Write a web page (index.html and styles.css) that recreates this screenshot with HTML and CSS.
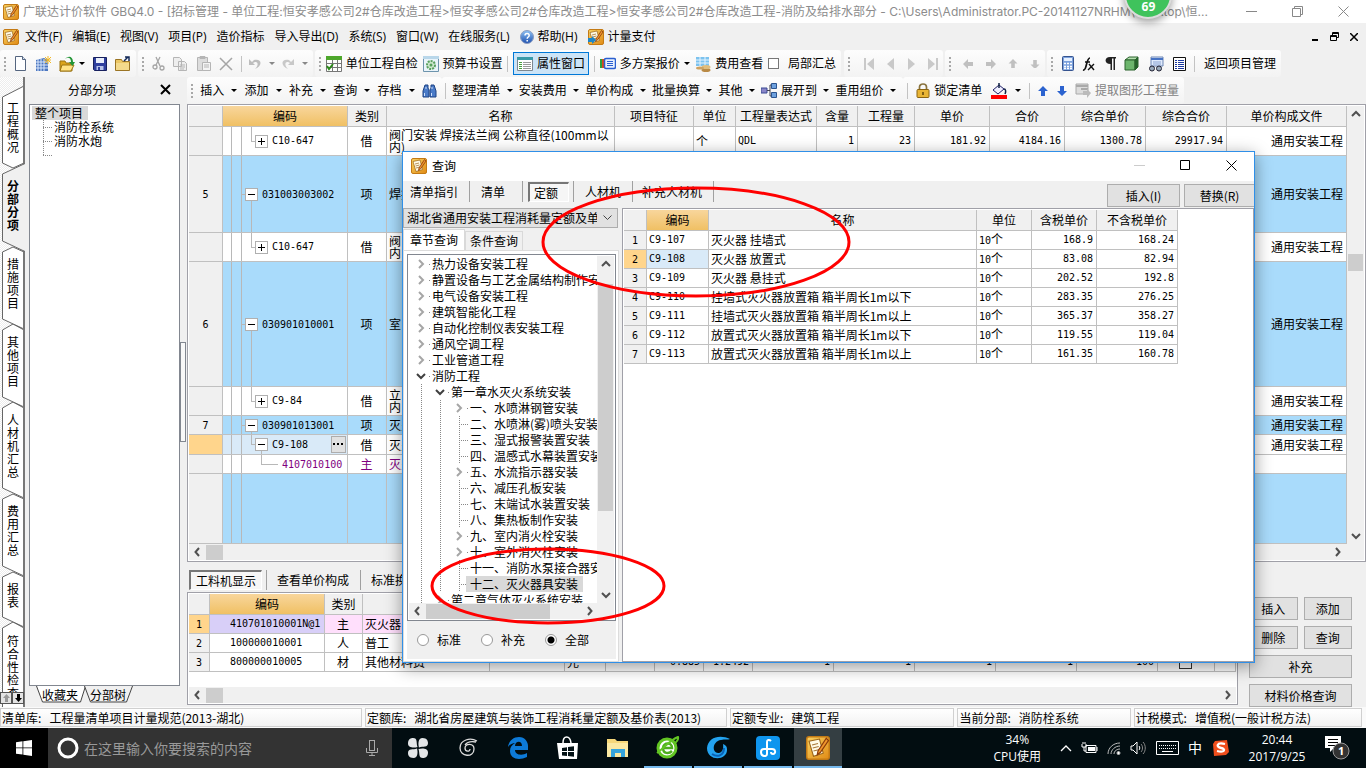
FILE: index.html
```html
<!DOCTYPE html>
<html lang="zh-CN">
<head>
<meta charset="utf-8">
<title>广联达计价软件 GBQ4.0</title>
<link rel="stylesheet" href="styles.css">
</head>
<body>
<svg class="defs" aria-hidden="true">
  <defs>
    <linearGradient id="og" x1="0" y1="0" x2="1" y2="1"><stop offset="0" stop-color="#f9d262"/><stop offset="1" stop-color="#e08a14"/></linearGradient>
    <linearGradient id="bg" x1="0" y1="0" x2="0" y2="1"><stop offset="0" stop-color="#8fc3f5"/><stop offset="1" stop-color="#1d4fae"/></linearGradient>
    <pattern id="dots" width="2" height="2" patternUnits="userSpaceOnUse"><rect width="2" height="2" fill="#fff"/><rect width="1" height="1" fill="#ededed"/><rect x="1" y="1" width="1" height="1" fill="#ededed"/></pattern>
    <symbol id="logo" viewBox="0 0 16 16"><rect x=".5" y=".5" width="15" height="15" rx="1.500" fill="url(#og)" stroke="#c47a14"/><path d="M2 3.500 9 2l2.500 9.500L5 13.500z" fill="#fffbe6" stroke="#9a6418" stroke-width=".7"/><path d="M4 6l4-1M4.500 8l4-1M5 10l4-1" stroke="#a8793a" stroke-width=".8"/><path d="M13.500 1.500 8 10l-.5 2.500L9.500 11 15 3z" fill="#f0962c" stroke="#8a3a0a" stroke-width=".8"/></symbol>
    <symbol id="left" viewBox="0 0 8 10"><path d="M6 1 2.500 5 6 9" fill="none" stroke="#505050" stroke-width="2"/></symbol>
    <symbol id="right" viewBox="0 0 8 10"><path d="M2 1 5.500 5 2 9" fill="none" stroke="#505050" stroke-width="2"/></symbol>
    <symbol id="up" viewBox="0 0 10 8"><path d="M1 6 5 2l4 4" fill="none" stroke="#505050" stroke-width="2"/></symbol>
    <symbol id="down" viewBox="0 0 10 8"><path d="M1 2l4 4 4-4" fill="none" stroke="#505050" stroke-width="2"/></symbol>
    <symbol id="arr" viewBox="0 0 10 10"><path d="M5 0 10 5H7v5H3V5H0z"/></symbol>
  </defs>
</svg>
<div class="app">
  <header class="titlebar">
    <svg class="i16"><use href="#logo"/></svg>
    <h1>广联达计价软件 GBQ4.0 - [招标管理 - 单位工程:恒安孝感公司2#仓库改造工程&gt;恒安孝感公司2#仓库改造工程&gt;恒安孝感公司2#仓库改造工程-消防及给排水部分 - C:\Users\Administrator.PC-20141127NRHM\Desktop\恒...</h1>
    <div class="winbtns">
      <button aria-label="最小化"><svg width="11" height="11"><path d="M0 5.500h11" stroke="#888"/></svg></button>
      <button aria-label="还原"><svg width="11" height="11"><path d="M.5 2.500h8v8h-8zM2.500 2.500v-2h8v8h-2" fill="none" stroke="#888"/></svg></button>
      <button aria-label="关闭"><svg width="11" height="11"><path d="M.5.5l10 10M10.500.5l-10 10" stroke="#888"/></svg></button>
    </div>
  </header>
  <div class="ball">69</div>

  <nav class="menubar">
    <svg class="i16"><use href="#logo"/></svg>
    <button>文件(F)</button><button>编辑(E)</button><button>视图(V)</button><button>项目(P)</button><button>造价指标</button><button>导入导出(D)</button><button>系统(S)</button><button>窗口(W)</button><button>在线服务(L)</button>
    <button><svg width="14" height="14"><circle cx="7" cy="7" r="6.500" fill="url(#bg)" stroke="#8a9cc0"/><path d="M5 5.500c0-3 4.200-2.500 4.200 0C9.200 7 7.200 7 7.200 8.700M7.200 10v1.500" fill="none" stroke="#fff" stroke-width="1.500"/></svg>帮助(H)</button>
    <button><svg class="i16"><use href="#logo"/><path d="M0 9h4V7l4 4-4 4v-2H0z" fill="#1d86c8"/></svg>计量支付</button>
    <div class="mdi">
      <button aria-label="最小化文档"><svg width="8" height="9"><path d="M1 8h6" stroke="#000" stroke-width="2"/></svg></button>
      <button aria-label="还原文档"><svg width="9" height="9"><path d="M.5 3.500h6v5h-6zM2.500 3V.5h6v5H7M.5 4.500h6M2.500 1.500h6" fill="none" stroke="#000"/></svg></button>
      <button aria-label="关闭文档"><svg width="8" height="8"><path d="M0 0l8 8M8 0 0 8" stroke="#000" stroke-width="1.500"/></svg></button>
    </div>
  </nav>

  <div class="toolbar">
    <div class="group g1"><i class="grip"></i>
      <button aria-label="新建"><svg width="13" height="15"><path d="M1.500.5h7l3 3v11h-10z" fill="#fdfeff" stroke="#54657f"/><path d="M8.500.5v3h3" fill="#d7e3f3" stroke="#54657f"/></svg></button>
      <button aria-label="新建向导"><svg class="i16"><path d="M1 4l8-2 4 2v11H1z" fill="#4c77c0"/><path d="M3 3v12M6 3v12M9 3v12M1 6h12M1 9h12M1 12h12" stroke="#dbe8fb"/><path d="M13 0v8M9 4h7M10 1l6 6M16 1l-6 6" stroke="#f2b825"/></svg></button>
      <button aria-label="打开"><svg class="i16"><path d="M1 5h5l1 2h6v8H1z" fill="#dba51c" stroke="#9c7412"/><path d="M3 9h12l-3 6H1z" fill="#ffe385" stroke="#9c7412"/><path d="M6 3c4-3 6 0 6 3h-2l3.500 4L16 6h-2c0-5-4-7-8-3z" fill="#239536"/></svg><i class="dd"></i></button>
      <button aria-label="保存"><svg width="14" height="14"><path d="M.5.5h13v13H1.500l-1-1z" fill="#2f3f9e" stroke="#17205e"/><path d="M3 1h8v5H3z" fill="#e9eefb"/><path d="M3.500 9h7v4h-7z" fill="#b9c4ea"/><path d="M5 10h2v3H5z" fill="#2f3f9e"/></svg></button>
      <button aria-label="关闭项目"><svg class="i16"><path d="M.5 3.500h6l1 2h7v9H.5z" fill="#ecc764" stroke="#9a7424"/><path d="M1 7h13v7H1z" fill="#f4da8b"/><path d="M9 5l4-4M10 1h4v4" fill="none" stroke="#142a58" stroke-width="1.500"/></svg></button>
    </div>
    <div class="group g2"><i class="grip"></i>
      <button aria-label="剪切"><svg width="13" height="15" fill="none" stroke="#a5a5a5" stroke-width="1.300"><path d="M4 1l4 9M8 1 4 9"/><circle cx="3" cy="11" r="2"/><circle cx="10" cy="12" r="2"/></svg></button>
      <button aria-label="复制"><svg class="i16" fill="#eee" stroke="#b5b5b5"><path d="M1.500 1.500h6l2 2v7h-8zM6.500 5.500h6l2 2v7h-8zM8 9h5M8 11h5M8 13h4"/></svg></button>
      <button aria-label="粘贴"><svg class="i16" fill="#ddd" stroke="#b5b5b5"><path d="M1.500 1.500h10v13h-10zM4 .5h5v2H4z"/><path d="M6.500 6.500h8v8h-8zM8 9h5M8 11h5" fill="#f4f4f4"/></svg></button>
      <button aria-label="删除"><svg width="14" height="14"><path d="M1 1l12 12M13 1 1 13" stroke="#a5a5a5" stroke-width="1.500"/></svg></button>
      <i class="sep"></i>
      <button aria-label="撤销"><svg width="12" height="12"><path d="M0 1v6h6L4 5c4-3 7 1 2 6 8-3 7-11-1-9L3 4z" fill="#bdbdbd"/></svg></button><i class="dd gray"></i>
      <button aria-label="重做"><svg width="12" height="12"><path d="M12 1v6H6l2-2C4 2 1 6 6 11-2 8-1 0 7 2l2 2z" fill="#c8c8c8"/></svg></button><i class="dd gray"></i>
    </div>
    <div class="group g3"><i class="grip"></i>
      <button><svg class="i16"><path d="M.5 3.500h15v12H.5zM0 7.500h16M0 11.500h16M6.500 3v13M11.500 3v13" fill="#fff" stroke="#777"/><path d="M0 0h16v4H0z" fill="#4ea72c"/><path d="M1 10l2 3 4-5" fill="none" stroke="#2d8b1b" stroke-width="2"/></svg>单位工程自检</button>
      <button><svg class="i16"><path d="M.5.5h15v15H.5z" fill="#eaf4fa" stroke="#6d94ad"/><path d="M0 0h16v3H0z" fill="#b9d7ea"/><circle cx="8" cy="9" r="4" fill="#cfe8cf" stroke="#58a05d" stroke-width="2" stroke-dasharray="2 1"/><circle cx="8" cy="9" r="1.500" fill="#58a05d"/></svg>预算书设置</button>
      <i class="sep"></i>
      <button class="on"><svg class="i16"><path d="M.5 1.500h15v13H.5z" fill="#fff" stroke="#7d8790"/><path d="M0 1h16v3H0z" fill="#3a9aa9"/><path d="M2 6.500h3M2 8.500h3M2 10.500h3M2 12.500h3" stroke="#47a03b"/><path d="M6 6.500h8M6 8.500h8M6 10.500h8M6 12.500h8" stroke="#999"/></svg>属性窗口</button>
      <i class="sep"></i>
      <button><svg class="i16"><path d="M1 3v9" stroke="#2b9f3c" stroke-width="2"/><path d="M3 3v9" stroke="#d84a21" stroke-width="2"/><rect x="4.500" y="2.500" width="11" height="10" rx="1.500" fill="#e9f1fe" stroke="#2b5fd0" stroke-width="1.500"/><path d="M7 5.500h6M7 7.500h6M7 9.500h6" stroke="#2b5fd0"/></svg>多方案报价</button><i class="dd"></i>
      <button><svg class="i16"><path d="M1 1h13v9H1z" fill="#7cc2ee"/><path d="M1 4h13M1 7h13M5 1v9M10 1v9" stroke="#e4f4ff"/><ellipse cx="11" cy="14" rx="4.500" ry="2" fill="#b98a45"/><ellipse cx="11" cy="11" rx="4.500" ry="2" fill="#e0bd7c"/><ellipse cx="5" cy="12" rx="4" ry="1.600" fill="#cda262"/></svg>费用查看</button>
      <label class="ck"><input type="checkbox">局部汇总</label>
    </div>
    <div class="group g4"><i class="grip"></i>
      <button aria-label="首条"><svg width="10" height="12" fill="#c9c9c9"><path d="M0 0h2v12H0zM10 0v12L3 6z"/></svg></button>
      <button aria-label="上一条"><svg width="7" height="12" fill="#c9c9c9"><path d="M7 0v12L0 6z"/></svg></button>
      <button aria-label="下一条"><svg width="7" height="12" fill="#c9c9c9"><path d="M0 0v12l7-6z"/></svg></button>
      <button aria-label="末条"><svg width="10" height="12" fill="#c9c9c9"><path d="M8 0h2v12H8zM0 0v12l7-6z"/></svg></button>
    </div>
    <div class="group g5"><i class="grip"></i>
      <button aria-label="左移"><svg width="10" height="10" fill="#c0c0c0"><use href="#arr" transform="rotate(-90 5 5)"/></svg></button>
      <button aria-label="右移"><svg width="10" height="10" fill="#c0c0c0"><use href="#arr" transform="rotate(90 5 5)"/></svg></button>
      <button aria-label="上移"><svg width="10" height="9" fill="#c0c0c0"><use href="#arr"/></svg></button>
      <button aria-label="下移"><svg width="10" height="9" fill="#c0c0c0"><use href="#arr" transform="rotate(180 5 5)"/></svg></button>
    </div>
    <div class="group g6"><i class="grip"></i>
      <button aria-label="计算器"><svg width="12" height="15"><rect x=".5" y=".5" width="11" height="14" rx="1" fill="#7ba1dc" stroke="#35538f"/><path d="M2 2h8v3H2z" fill="#e6f0ff"/><path d="M2 7.500h8M2 10.500h8M2 12.500h8" stroke="#fff" stroke-width="1.500" stroke-dasharray="2 1"/></svg></button>
      <button aria-label="函数"><svg width="14" height="14" fill="none" stroke="#111"><path d="M1 13c4 1 3-12 7-12M3 5h5" stroke-width="1.700"/><path d="M7 7l5 6M12 7l-6 6" stroke-width="1.400"/></svg></button>
      <button aria-label="段落"><svg width="11" height="13"><path d="M5 0h6v1.500H10V13H8.500V1.500H7V13H5.500V7C-1 7-1 0 5 0z" fill="#222"/></svg></button>
      <button aria-label="图形"><svg width="15" height="15" stroke="#2a632c"><path d="M1 4 5 1h9l-3 3z" fill="#b5dfb0"/><path d="M1 4h10v10H1z" fill="#6cb56c"/><path d="M11 4l3-3v10l-3 3z" fill="#24642a"/></svg></button>
      <button aria-label="查找表"><svg class="i16"><path d="M3 1h12v9H3z" fill="#dfeafc" stroke="#6d86b4"/><path d="M3 3h12" stroke="#4773c4" stroke-width="2"/><path d="M5 6h8M5 8h8" stroke="#8aa3d1"/><circle cx="4" cy="12.500" r="2.500" fill="#9ab" stroke="#223"/><circle cx="11" cy="12.500" r="2.500" fill="#9ab" stroke="#223"/></svg></button>
      <button aria-label="列表"><svg width="13" height="14"><path d="M.5.5h12v13H.5z" fill="#fff" stroke="#111"/><path d="M2 3.500h9M2 5.500h9M2 7.500h9M2 9.500h9M2 11.500h9" stroke="#1d3aa0" stroke-dasharray="2 1 6 1"/></svg></button>
      <i class="sep"></i>
      <button>返回项目管理</button>
    </div>
  </div>

  <div class="work">
    <nav class="rail">
      <svg class="railbg" width="25" height="630" fill="#fff" stroke="#666">
        <rect width="25" height="630" fill="url(#dots)" stroke="none"/>
        <path d="M24 551 13 545 2.500 551V640H24z"/>
        <path d="M24 500 13 495 2.500 500v40L24 550z"/>
        <path d="M24 422 13 417 2.500 422v67L24 499z"/>
        <path d="M24 331 13 325 2.500 331v80L24 421z"/>
        <path d="M24 253 13 247 2.500 253v67L24 330z"/>
        <path d="M24 175 13 170 2.500 175v67L24 252z"/>
        <path d="M24 9 2.500 20V86L13 91l11-5z"/>
        <path d="M24 0V630" stroke="#777" stroke-width="2"/>
        <path d="M26 86 2.500 97v67L26 175z" fill="#f0f0f0" stroke="none"/>
        <path d="M25 86.500 2.500 97v67L25 174.500" fill="none"/>
      </svg>
      <button>工程概况</button><button class="cur">分部分项</button><button>措施项目</button><button>其他项目</button><button>人材机汇总</button><button>费用汇总</button><button>报表</button><button>符合性检查</button>
      <div class="spin"><button aria-label="向上" disabled><svg width="7" height="8" fill="#999"><path d="M3.500 0 7 4H5v4H2V4H0z"/></svg></button><button aria-label="向下"><svg width="7" height="8"><path d="M3.500 8 7 4H5V0H2v4H0z"/></svg></button></div>
    </nav>

    <aside class="panel">
      <div class="phead"><span>分部分项</span><button aria-label="关闭面板"><svg width="11" height="11"><path d="M1 1l9 9M10 1l-9 9" stroke="#000" stroke-width="2"/></svg></button></div>
      <div class="ptree">
        <div class="root">整个项目</div>
        <ul><li>消防栓系统</li><li>消防水炮</li><li></li></ul>
      </div>
      <div class="ptabs"><button><svg width="50" height="17"><path d="M.5 0l6 16h38l5-16" fill="#fff" stroke="#444"/></svg><span>收藏夹</span></button><button><svg width="50" height="17"><path d="M.5 0l6 16h36l6-16" fill="#f0f0f0" stroke="#444"/></svg><span>分部树</span></button></div>
    </aside>
    <div class="split"><i></i></div>

    <main class="main">
      <div class="toolbar t2">
        <div class="group h1"><i class="grip"></i><button>插入</button><i class="dd"></i><button>添加</button><i class="dd"></i><button>补充</button><i class="dd"></i><button>查询</button><i class="dd"></i><button>存档</button><i class="dd"></i>
          <button aria-label="查找"><svg width="15" height="14"><path d="M3 1h3v3l1 2v7H1V7zM9 1h3l2 6v6H8V6l1-2z" fill="#4a7bc8" stroke="#1d4384"/><path d="M2.500 9v3M9.500 9v3M4 3v2M10 3v2" stroke="#cfe0fa"/></svg></button></div>
        <div class="group h2"><i class="sep"></i><button>整理清单</button><i class="dd"></i><button>安装费用</button><i class="dd"></i><button>单价构成</button><i class="dd"></i><button>批量换算</button><i class="dd"></i><button>其他</button><i class="dd"></i>
          <button><svg class="i16"><path d="M0 5h6v5H0z" fill="#8a86c9" stroke="#3b4a93"/><path d="M6 7.500h3M9 2v11M9 2h2M9 13h2" stroke="#445"/><path d="M10.500.5h5v5h-5zM10.500 9.500h5v5h-5z" fill="#6ea1de" stroke="#2c548f"/></svg>展开到</button><i class="dd"></i><button>重用组价</button><i class="dd"></i></div>
        <div class="group h3"><i class="sep"></i><button><svg width="14" height="15"><path d="M3.500 7V4c0-4 7-4 7 0v3" fill="none" stroke="#8a7440" stroke-width="1.700"/><rect x="1" y="6.500" width="12" height="8" rx="1" fill="#e9b535" stroke="#8a6412"/><path d="M7 9v3" stroke="#5b430b" stroke-width="1.500"/></svg>锁定清单</button>
          <button aria-label="填充颜色"><svg class="i16"><path d="M2 7l6-5 5 4-6 5z" fill="#eef" stroke="#226"/><path d="M8 5V0M13 6c2 0 2 3 1 5" fill="none" stroke="#124" stroke-width="1.500"/><path d="M0 12h16v4H0z" fill="red"/></svg></button><i class="dd"></i><i class="sep"></i>
          <button aria-label="上移行"><svg width="10" height="10" fill="#2c63cf"><use href="#arr"/></svg></button><button aria-label="下移行"><svg width="10" height="10" fill="#2c63cf"><use href="#arr" transform="rotate(180 5 5)"/></svg></button>
          <button disabled><svg class="i16"><path d="M1 1h12v10H1z" fill="#ddd" stroke="#aaa"/><path d="M1 3h12M6 6h7" stroke="#aaa" stroke-width="2"/><path d="M8 8h4V6l4 4-4 5v-3H8z" fill="#bbb"/></svg>提取图形工程量</button></div>
      </div>

      <section class="box upper">
        <div class="gridrow">
          <div class="scrollarea">
          <table class="grid">
            <colgroup><col class="c34"><col class="c125"><col class="c39"><col><col class="c79"><col class="c42"><col class="c81"><col class="c41"><col class="c57"><col class="c75"><col class="c75"><col class="c81"><col class="c81"><col class="c120"></colgroup>
            <thead><tr><th></th><th class="or">编码</th><th>类别</th><th>名称</th><th>项目特征</th><th>单位</th><th>工程量表达式</th><th>含量</th><th>工程量</th><th>单价</th><th>合价</th><th>综合单价</th><th>综合合价</th><th>单价构成文件</th></tr></thead>
            <tbody>
              <tr class="r29"><th></th><td class="code l2"><b class="pm plus"></b><span class="n">C10-647</span></td><td class="c">借</td><td>阀门安装 焊接法兰阀 公称直径(100mm以<br>内)</td><td></td><td>个</td><td class="n">QDL</td><td class="r n">1</td><td class="r n">23</td><td class="r n">181.92</td><td class="r n">4184.16</td><td class="r n">1300.78</td><td class="r n">29917.94</td><td class="r">通用安装工程</td></tr>
              <tr class="r77 blue"><th class="n">5</th><td class="code l1"><b class="pm"></b><span class="n">031003003002</span></td><td class="c">项</td><td>焊接</td><td></td><td></td><td></td><td></td><td></td><td></td><td></td><td></td><td></td><td class="r">通用安装工程</td></tr>
              <tr class="r29"><th></th><td class="code l2"><b class="pm plus"></b><span class="n">C10-647</span></td><td class="c">借</td><td>阀<br>内</td><td></td><td></td><td></td><td></td><td></td><td></td><td></td><td></td><td></td><td class="r">通用安装工程</td></tr>
              <tr class="r125 blue"><th class="n">6</th><td class="code l1"><b class="pm"></b><span class="n">030901010001</span></td><td class="c">项</td><td>室</td><td></td><td></td><td></td><td></td><td></td><td></td><td></td><td></td><td></td><td class="r">通用安装工程</td></tr>
              <tr class="r29"><th></th><td class="code l2"><b class="pm plus"></b><span class="n">C9-84</span></td><td class="c">借</td><td>立<br>内</td><td></td><td></td><td></td><td></td><td></td><td></td><td></td><td></td><td></td><td class="r">通用安装工程</td></tr>
              <tr class="r19 blue"><th class="n">7</th><td class="code l1"><b class="pm"></b><span class="n">030901013001</span></td><td class="c">项</td><td>灭火</td><td></td><td></td><td></td><td></td><td></td><td></td><td></td><td></td><td></td><td class="r">通用安装工程</td></tr>
              <tr class="r20"><th class="sel"></th><td class="code l2 has act"><b class="pm"></b><span class="n">C9-108</span><button class="more" aria-label="更多"><svg width="11" height="2"><path d="M0 0h2v2H0zM4 0h2v2H4zM8 0h2v2H8z"/></svg></button></td><td class="c">借</td><td>灭火</td><td></td><td></td><td></td><td></td><td></td><td></td><td></td><td></td><td></td><td class="r">通用安装工程</td></tr>
              <tr class="r19 purple"><th></th><td class="code l3"><span class="n">4107010100</span></td><td class="c">主</td><td>灭火</td><td></td><td></td><td></td><td></td><td></td><td></td><td></td><td></td><td></td><td></td></tr>
              <tr class="blue"><th></th><td class="code"></td><td></td><td></td><td></td><td></td><td></td><td></td><td></td><td></td><td></td><td></td><td></td><td></td></tr>
            </tbody>
          </table>
          </div>
          <div class="vs v1"><svg width="10" height="8"><use href="#up"/></svg><i></i><svg width="10" height="8"><use href="#down"/></svg></div>
        </div>
        <div class="hs"><svg width="8" height="10"><use href="#left"/></svg><i></i><svg width="8" height="10"><use href="#right"/></svg></div>
      </section>

      <div class="subtabs"><button class="press">工料机显示</button><button>查看单价构成</button><button>标准换</button></div>

      <div class="lower">
        <section class="box">
          <table class="grid g19">
            <colgroup><col class="c21"><col class="c115"><col class="c38"><col><col class="c75"><col class="c41"><col class="c49"><col class="c49"><col class="c49"><col class="c81"><col class="c81"><col class="c81"><col class="c81"><col class="c81"><col class="c57"><col class="c21"></colgroup>
            <thead><tr><th></th><th class="or">编码</th><th>类别</th><th></th><th></th><th></th><th></th><th></th><th></th><th></th><th></th><th></th><th></th><th></th><th></th><th></th></tr></thead>
            <tbody>
              <tr class="pink"><th class="sel n">1</th><td class="lil in n">410701010001N@1</td><td class="c">主</td><td>灭火器</td><td></td><td></td><td></td><td></td><td></td><td></td><td></td><td></td><td></td><td></td><td></td><td></td></tr>
              <tr><th class="n">2</th><td class="in n">100000010001</td><td class="c">人</td><td>普工</td><td></td><td></td><td></td><td></td><td></td><td></td><td></td><td></td><td></td><td></td><td></td><td></td></tr>
              <tr><th class="n">3</th><td class="in n">800000010005</td><td class="c">材</td><td>其他材料费</td><td></td><td>元</td><td></td><td class="r n">0.885</td><td class="r n">1.2492</td><td class="r n">1</td><td class="r n">1</td><td class="r n">1</td><td class="r n">1</td><td class="r n">100</td><td class="c"><input type="checkbox" aria-label="暂估"></td><td></td></tr>
            </tbody>
          </table>
          <div class="hs"><svg width="8" height="10"><use href="#left"/></svg><i></i><svg width="8" height="10"><use href="#right"/></svg></div>
        </section>
        <div class="btns"><button>插入</button><button>添加</button><button>删除</button><button>查询</button><button class="wide">补充</button><button class="wide">材料价格查询</button></div>
      </div>
    </main>
  </div>

  <footer class="status"><span class="s1">清单库: &nbsp;&nbsp;工程量清单项目计量规范(2013-湖北)</span><span class="s1">定额库: &nbsp;&nbsp;湖北省房屋建筑与装饰工程消耗量定额及基价表(2013)</span><span class="s2">定额专业: &nbsp;&nbsp;建筑工程</span><span class="s3">当前分部: &nbsp;&nbsp;消防栓系统</span><span class="s4">计税模式: &nbsp;&nbsp;增值税(一般计税方法)</span></footer>

  <footer class="taskbar">
    <button class="start" aria-label="开始"><svg width="16" height="16" fill="#fff"><path d="M0 2.200l6.500-.9v6.200H0zM7.300 1.200 16 0v7.500H7.300zM0 8.300h6.500v6.300L0 13.700zM7.300 8.300H16V16l-8.700-1.200z"/></svg></button>
    <label class="search"><svg width="22" height="22"><circle cx="11" cy="11" r="9" fill="none" stroke="#fff" stroke-width="3"/></svg><input type="text" placeholder="在这里输入你要搜索的内容" aria-label="搜索"><svg width="12" height="16" fill="none" stroke="#aaa"><rect x="3.500" y=".5" width="5" height="10"/><path d="M.5 8v4.500h11V8M6 13v3M3 15.500h6"/></svg></label>
    <div class="apps">
      <button aria-label="应用"><svg width="22" height="22" fill="#e4e6e8"><path d="M10.500 10C7 11 1 11 1 6.500 1 2 4 1 6 1c5 0 3 5 4.500 9z"/><path d="M12 10.500C11 7 11 1 15.500 1 20 1 21 4 21 6c0 5-5 3-9 4.500z"/><path d="M11.500 12c3.500-1 9.500-1 9.500 3.500 0 4.500-3 5.500-5 5.500-5 0-3-5-4.500-9z"/><path d="M10 11.500c1 3.500 1 9.500-3.500 9.500C2 21 1 18 1 16c0-5 5-3 9-4.500z"/></svg></button>
      <button aria-label="浏览器助手"><svg width="20" height="20" fill="none" stroke="#ddd" stroke-width="1.300"><path d="M19 3C12-1 2 2 2 10c0 9 14 10 14 1 0-6-9-6-9-1 0 4 5 4 5 1M18 4c-5-1-9 0-11 3"/></svg></button>
      <button aria-label="Edge"><svg width="22" height="22"><path d="M1 10C2 3 7 0 12 0c6 0 9 5 9 9v4H8c0 5 7 6 12 3v4C12 24 3 22 3 14c0-4 2-6 5-8-2 0-5 1-7 4zm7-1h7c0-6-7-5-7 0z" fill="#0d7ad8"/></svg></button>
      <button aria-label="应用商店"><svg width="22" height="24"><path d="M0 7h21l-1 16H2z" fill="#fff"/><path d="M6 7c0-8 7-8 8 0" fill="none" stroke="#fff" stroke-width="1.500"/><path d="M5 12l5-.7V15H5zM11 11l6-.8V15h-6zM5 16h5v4l-5-.6zM11 16h6v4.800L11 20z" fill="#021014"/></svg></button>
      <button aria-label="资源管理器"><svg width="22" height="20"><path d="M0 1h8l2 2h11v16H0z" fill="#f6d77a"/><path d="M0 5h21v14H0z" fill="#fbe8a2"/><path d="M4 11h14v8h-4v-4H8v4H4z" fill="#35a3dc"/></svg></button>
      <button class="run" aria-label="360浏览器"><svg width="24" height="24"><circle cx="11" cy="12" r="9" fill="#fff" stroke="#62c523" stroke-width="3"/><path d="M7 12h9c0-6-8-6-9 0 0 6 6 6 9 3" fill="none" stroke="#4dae1d" stroke-width="2.500"/><path d="M1 17C8 12 14 4 22 1c1 3-3 6-4 7" fill="none" stroke="#62c523" stroke-width="2"/></svg></button>
      <button class="run" aria-label="广联达"><svg width="24" height="24"><path d="M24 3C14-2 2 1 1 12c0 14 21 13 20 1 0-3-2-4-4-5 1 7-2 9-5 9C5 16 7 5 15 4c4-1 7 0 9-1z" fill="#23a3f0"/><path d="M6 18c6 4 12 1 12-6" fill="none" stroke="#0b62b5" stroke-width="2"/></svg></button>
      <button class="run" aria-label="云服务"><svg width="24" height="24"><rect width="24" height="24" rx="4" fill="#0f95ee"/><path d="M15 5c-2-2-4-1-4 1v12c0 3-6 3-6-2 0-2 1-3 3-3h8c4 0 4 5 1 5-2 0-2-2-2-2" fill="none" stroke="#fff" stroke-width="2"/></svg></button>
      <button class="run cur" aria-label="计价软件"><svg width="24" height="24" viewBox="0 0 16 16"><use href="#logo"/></svg></button>
    </div>
    <div class="tray">
      <div class="two cpu">34%<br>CPU使用</div>
      <svg width="12" height="7"><path d="M1 6l5-5 5 5" fill="none" stroke="#fff" stroke-width="1.300"/></svg>
      <svg width="17" height="12" fill="none" stroke="#fff"><path d="M5 3.500h10v7H5zM16 5v4M1 2v3h4V2M2 0v2M4 0v2M3 5v4h2"/><path d="M7 5h7v4H7z" fill="#fff" stroke="none"/></svg>
      <svg width="14" height="13" fill="none" stroke="#bbb"><path d="M1 12C1 6 6 1 13 1M4 12c0-4 4-8 9-8M7 12c0-3 3-5 6-5"/><circle cx="11.500" cy="11" r="1.500" fill="#fff"/></svg>
      <svg width="17" height="14" fill="none" stroke="#fff"><path d="M1 5h2l4-4v12L3 9H1zM9 5c1 1 1 3 0 4"/><path d="M11 3c2 2 2 6 0 8M13 1c3 3 3 9 0 12" stroke="#888"/></svg>
      <svg width="23" height="14" fill="none" stroke="#fff"><path d="M.5.5h22v13H.5z"/><path d="M3 4.500h17M3 7.500h17" stroke-dasharray="1 1"/><path d="M6 10.500h11"/></svg>
      <span class="ime">中</span>
      <svg width="16" height="16"><path d="M2 1l12-1 2 12-3 3-12 1-1-12z" fill="#f04e1c"/><path d="M12 4C3 2 3 7 8 8s4 5-4 3" fill="none" stroke="#fff" stroke-width="2.300"/></svg>
      <div class="two clock">20:44<br>2017/9/25</div>
      <svg class="note" width="25" height="24"><path d="M0 0h16v12H9l-4 4v-4H0z" fill="#fff"/><path d="M3 3.500h10M3 6.500h10M3 9.500h7" stroke="#000"/><circle cx="16" cy="15" r="8" fill="#333" stroke="#999"/><text x="13" y="19" fill="#fff" font-size="11" font-weight="bold">1</text></svg>
    </div>
  </footer>

  <section class="dialog" role="dialog" aria-label="查询">
    <div class="dtitle"><svg class="i16"><use href="#logo"/></svg><h2>查询</h2>
      <div class="winbtns"><button aria-label="最小化" disabled><svg width="11" height="11"><path d="M0 5.500h11" stroke="#ccc"/></svg></button><button aria-label="最大化"><svg width="11" height="11"><path d="M.5.5h9v9h-9z" fill="none" stroke="#000"/></svg></button><button aria-label="关闭"><svg width="11" height="11"><path d="M.5.5l10 10M10.500.5l-10 10" stroke="#000"/></svg></button></div></div>
    <div class="dbar"><button>清单指引</button><button class="b2">清单</button><button class="b3"><span class="press">定额</span></button><button>人材机</button><button class="b5">补充人材机</button>
      <div class="dact"><button>插入(I)</button><button>替换(R)</button></div></div>
    <div class="dbody">
      <div class="dleft">
        <select aria-label="定额库"><option>湖北省通用安装工程消耗量定额及单</option></select>
        <div class="dtabs"><button class="cur">章节查询</button><button>条件查询</button></div>
        <div class="page">
          <div class="tree">
            <div class="trow">
              <ul>
                <li class="a x">热力设备安装工程</li><li class="a x">静置设备与工艺金属结构制作安装</li><li class="a x">电气设备安装工程</li><li class="a x">建筑智能化工程</li><li class="a x">自动化控制仪表安装工程</li><li class="a x">通风空调工程</li><li class="a x">工业管道工程</li><li class="a o">消防工程</li>
                <li class="b o">第一章水灭火系统安装</li><li class="d x">一、水喷淋钢管安装</li><li class="d">二、水喷淋(雾)喷头安装</li><li class="d">三、湿式报警装置安装</li><li class="d">四、温感式水幕装置安装</li><li class="d x">五、水流指示器安装</li><li class="d">六、减压孔板安装</li><li class="d">七、末端试水装置安装</li><li class="d">八、集热板制作安装</li><li class="d x">九、室内消火栓安装</li><li class="d x">十、室外消火栓安装</li><li class="d">十一、消防水泵接合器安装</li><li class="d end"><mark>十二、灭火器具安装</mark></li><li class="b x">第二章气体灭火系统安装</li>
              </ul>
              <div class="vs v2"><svg width="10" height="8"><use href="#up"/></svg><i></i><svg width="10" height="8"><use href="#down"/></svg></div>
            </div>
            <div class="hs h"><svg width="8" height="10"><use href="#left"/></svg><i></i><svg width="8" height="10"><use href="#right"/></svg></div>
          </div>
          <div class="radios"><label><input type="radio" name="k">标准</label><label><input type="radio" name="k">补充</label><label><input type="radio" name="k" checked>全部</label></div>
        </div>
      </div>
      <div class="box dright">
        <table class="grid g19 q">
          <colgroup><col class="c23"><col class="c62"><col class="c268"><col class="c55"><col class="c65"><col class="c81"></colgroup>
          <thead><tr><th></th><th class="or">编码</th><th>名称</th><th>单位</th><th>含税单价</th><th>不含税单价</th></tr></thead>
          <tbody>
            <tr><th class="n">1</th><td class="n">C9-107</td><td>灭火器 挂墙式</td><td><span class="n">10</span>个</td><td class="r n">168.9</td><td class="r n">168.24</td></tr>
            <tr><th class="sel n">2</th><td class="act n">C9-108</td><td>灭火器 放置式</td><td><span class="n">10</span>个</td><td class="r n">83.08</td><td class="r n">82.94</td></tr>
            <tr><th class="n">3</th><td class="n">C9-109</td><td>灭火器 悬挂式</td><td><span class="n">10</span>个</td><td class="r n">202.52</td><td class="r n">192.8</td></tr>
            <tr><th class="n">4</th><td class="n">C9-110</td><td>挂墙式灭火器放置箱 箱半周长1m以下</td><td><span class="n">10</span>个</td><td class="r n">283.35</td><td class="r n">276.25</td></tr>
            <tr><th class="n">5</th><td class="n">C9-111</td><td>挂墙式灭火器放置箱 箱半周长1m以上</td><td><span class="n">10</span>个</td><td class="r n">365.37</td><td class="r n">358.27</td></tr>
            <tr><th class="n">6</th><td class="n">C9-112</td><td>放置式灭火器放置箱 箱半周长1m以下</td><td><span class="n">10</span>个</td><td class="r n">119.55</td><td class="r n">119.04</td></tr>
            <tr><th class="n">7</th><td class="n">C9-113</td><td>放置式灭火器放置箱 箱半周长1m以上</td><td><span class="n">10</span>个</td><td class="r n">161.35</td><td class="r n">160.78</td></tr>
          </tbody>
        </table>
      </div>
    </div>
    <svg class="ring" width="460" height="480" fill="none" stroke="red" stroke-width="3"><ellipse cx="293" cy="90" rx="153" ry="54"/><ellipse cx="145" cy="434" rx="116" ry="37"/></svg>
  </section>
</div>
</body>
</html>
```

FILE: styles.css
```css
* { box-sizing: border-box; }
body { margin: 0; font: 12px/16px "Noto Sans CJK SC", sans-serif; color: #000; background: #f0f0f0; }
button { font: inherit; color: inherit; background: none; border: 0; padding: 0; white-space: nowrap; display: flex; align-items: center; justify-content: center; gap: 4px; }
ul { list-style: none; margin: 0; padding: 0; }
svg { display: block; flex: none; }
.defs { position: absolute; width: 0; height: 0; }
.i16 { width: 16px; height: 16px; }
.app { position: relative; height: 100vh; min-height: 720px; display: flex; flex-direction: column; overflow: hidden; }

/* title and menus */
.titlebar { height: 23px; flex: none; background: #fff; display: flex; align-items: center; padding-left: 3px; gap: 4px; color: #8c8c8c; }
.titlebar h1 { font: 12px/20px Inter, "Noto Sans CJK SC", sans-serif; margin: 0; flex: 1; white-space: nowrap; overflow: hidden; }
.winbtns { display: flex; }
.winbtns button { width: 46px; height: 22px; }
.ball { position: absolute; left: 84%; margin-left: -23px; top: -29px; width: 48px; height: 48px; border-radius: 50%; background: #3fc35c; border: 2px solid #dcdcdc; box-shadow: 0 3px 8px #0006; color: #fff; font: bold 12px/16px "Open Sans", sans-serif; text-align: center; padding-top: 26px; }
.menubar { height: 27px; flex: none; display: flex; align-items: center; gap: 10px; padding: 0 8px 0 3px; font-family: "Open Sans", "Noto Sans CJK SC", sans-serif; }
.menubar > svg { margin-right: -4px; }
.mdi { margin-left: auto; display: flex; gap: 11px; }

.toolbar { height: 27px; flex: none; display: flex; gap: 2px; font-family: "Open Sans", "Noto Sans CJK SC", sans-serif; }
.group { display: flex; align-items: center; justify-content: space-between; padding: 0 5px 0 4px; background: linear-gradient(#fdfdfd, #f3f3f3); border-radius: 3px; flex: none; }
.grip { width: 2px; height: 14px; background: repeating-linear-gradient(#a8a8a8 0 2px, transparent 2px 4px); }
.sep { width: 1px; height: 16px; background: #c3c3c3; }
.dd { border: 3px solid transparent; border-top-color: #000; border-bottom: 0; }
.dd.gray { border-top-color: #888; }
.g1 { width: 136px; } .g2 { width: 175px; } .g3 { width: 526px; } .g4 { width: 99px; margin-left: 1px; } .g5 { width: 100px; } .g6 { width: 234px; }
.on { border: 1px solid #0078d7; background: #cce4f7; height: 23px; padding: 0 3px; }
.ck { display: flex; align-items: center; gap: 9px; }
input[type=checkbox] { appearance: none; width: 11px; height: 11px; border: 1px solid #777; background: #fff; margin: 0; }
.t2 { gap: 0; }
.h1 { width: 255px; } .h2 { width: 461px; padding-left: 3px; padding-right: 7px; } .h3 { width: 281px; padding-left: 4px; }
button:disabled { color: #838383; }

/* work area */
.work { flex: 1; min-height: 0; display: flex; }
.rail { width: 25px; flex: none; position: relative; padding-top: 11px; overflow: hidden; }
.railbg { position: absolute; left: 0; top: 0; }
.rail > button { position: relative; width: 24px; padding: 13px 5px 13px 7px; white-space: normal; line-height: 13px; word-break: break-all; }
.rail .cur { font-weight: bold; }
.spin { position: absolute; left: 0; bottom: 3px; display: flex; }
.spin button { width: 12px; height: 12px; background: #e4e4e4; border: 1px solid #555; }
.panel { width: 151px; flex: none; margin-left: 4px; display: flex; flex-direction: column; }
.phead { height: 27px; display: flex; align-items: center; justify-content: space-between; padding: 0 9px 2px 39px; }
.ptree { flex: 1; background: #fff; border: 1px solid #828790; padding: 1px 2px; line-height: 14px; }
.root { background: #d9d9d9; width: 56px; padding-left: 3px; }
.ptree ul { margin-left: 11px; }
.ptree li { height: 14px; text-indent: 11px; background: linear-gradient(#888 50%, transparent 50%) 0 0 / 1px 2px repeat-y, repeating-linear-gradient(90deg, #888 0 1px, transparent 1px 2px) 0 7px / 9px 1px no-repeat; }
.ptree li:last-child { height: 8px; }
.ptabs { height: 21px; display: flex; padding-left: 7px; }
.ptabs button { position: relative; width: 48px; height: 17px; }
.ptabs svg { position: absolute; left: 0; top: 0; }
.ptabs span { position: relative; }
.split { width: 7px; flex: none; display: flex; align-items: center; }
.split i { width: 6px; height: 100px; border: 1px solid #828790; background: #f8f8f8; }
.main { flex: 1; min-width: 0; display: flex; flex-direction: column; }
.box { border: 1px solid #a0a0a8; background: #fff; padding: 1px; display: flex; flex-direction: column; min-width: 0; }
.upper { flex: 1; min-height: 0; }
.gridrow { flex: 1; min-height: 0; display: flex; }
.scrollarea { flex: 1; min-width: 0; overflow: hidden; }

/* grids */
.grid { border-collapse: separate; border-spacing: 0; table-layout: fixed; width: 100%; line-height: 13px; }
.scrollarea .grid { height: 100%; }
.grid th { background: #f0f0f0; font-weight: normal; border: solid #c0c0c0; border-width: 0 1px 1px 0; padding: 0; white-space: nowrap; overflow: hidden; }
.grid td { border: solid #c0c0c0; border-width: 0 1px 1px 0; padding: 0 3px 1px 2px; overflow: hidden; white-space: nowrap; }
.grid thead tr { height: 21px; }
.grid thead th { padding-bottom: 2px; }
.grid .or { background: linear-gradient(#f8d69c, #f0c064); }
.grid .sel { background: #ffd58c; }
.n { font-family: "DejaVu Sans Mono", "Noto Sans CJK SC", monospace; font-size: 10px; }
.grid .c { text-align: center; }
.grid .r { text-align: right; }
.r19, .g19 tbody tr { height: 19px; } .r20 { height: 20px; } .r29 { height: 29px; } .r77 { height: 77px; } .r125 { height: 125px; }
.r29 { line-height: 12px; }
.blue td { background-color: #a9dbfb; }
.purple td { color: #800080; }
.pink td { background: #ffdffc; }
.grid .lil { background: #d8cff8; }
.grid .in { padding-left: 20px; }
.grid .act { background-color: #d9eaf8; }
.code { --g: linear-gradient(#b8b8b8, #b8b8b8); background: var(--g) 8px 0 / 1px 100% no-repeat, var(--g) 18px 0 / 1px 100% no-repeat; }
.grid .l1 { padding-left: 22px; background-image: var(--g), var(--g), var(--g), var(--g); background-position: 8px 0, 18px 0, 18px 50%, 28px 100%; background-size: 1px 100%, 1px 100%, 4px 1px, 1px 50%; }
.grid .l2 { padding-left: 32px; background-image: var(--g), var(--g), var(--g), var(--g); background-position: 8px 0, 18px 0, 28px 50%, 28px 0; background-size: 1px 100%, 1px 100%, 4px 1px, 1px 50%; }
.grid .l2.has { background-image: var(--g), var(--g), var(--g), var(--g), var(--g); background-position: 8px 0, 18px 0, 28px 50%, 28px 0, 38px 100%; background-size: 1px 100%, 1px 100%, 4px 1px, 1px 50%, 1px 50%; }
.grid .l3 { padding-left: 59px; background-image: var(--g), var(--g), var(--g), var(--g); background-position: 8px 0, 18px 0, 38px 50%, 38px 0; background-size: 1px 100%, 1px 100%, 17px 1px, 1px 50%; }
.pm { display: inline-block; vertical-align: middle; width: 13px; height: 13px; margin-right: 4px; border: 1px solid #b0b0b0; background: linear-gradient(#000, #000) 50% 50% / 7px 1px no-repeat #fff; }
.pm.plus { background: linear-gradient(#000, #000) 50% 50% / 7px 1px no-repeat, linear-gradient(#000, #000) 50% 50% / 1px 7px no-repeat #fff; }
.more { float: right; width: 15px; height: 17px; margin-right: -2px; background: #e1e1e1; border: 1px solid #adadad; }
.c21 { width: 21px; } .c23 { width: 23px; } .c34 { width: 34px; } .c38 { width: 38px; } .c39 { width: 39px; } .c41 { width: 41px; } .c42 { width: 42px; } .c49 { width: 49px; } .c55 { width: 55px; } .c57 { width: 57px; } .c62 { width: 62px; } .c65 { width: 65px; } .c75 { width: 75px; } .c79 { width: 79px; } .c81 { width: 81px; } .c115 { width: 115px; } .c120 { width: 120px; } .c125 { width: 125px; } .c268 { width: 268px; }
.grid input { width: 13px; height: 13px; border-color: #333; display: inline-block; vertical-align: middle; }

/* scroll bars */
.vs { width: 17px; flex: none; background: #f0f0f0; display: flex; flex-direction: column; align-items: center; padding: 4px 0; }
.vs i { width: 15px; background: #cdcdcd; }
.v1 i { height: 17px; margin: 136px 0 auto; }
.v2 i { height: 227px; margin: 16px 0 auto; }
.hs { height: 16px; flex: none; background: #f0f0f0; display: flex; align-items: center; padding: 0 4px; }
.hs i { width: 17px; height: 15px; background: #cdcdcd; margin: 0 auto 0 5px; }
.upper .hs { padding-right: 22px; }

.subtabs { height: 30px; display: flex; align-items: end; padding: 0 0 2px 2px; }
.subtabs button { height: 20px; padding: 0 10px; border-left: 1px solid #a0a0a0; }
.subtabs button:nth-child(2) { margin-left: 4px; padding-right: 11px; }
.subtabs .press { padding: 0 5px; }
.subtabs .press, .dbar .press { border: 1px solid #fff; border-top: 2px solid #777; border-left: 2px solid #777; background: #f6f6f6; }
.lower { display: flex; height: 115px; flex: none; }
.lower .box { flex: 1; height: 113px; }
.lower .hs { margin-top: auto; }
.btns { width: 128px; flex: none; display: grid; grid-template-columns: 1fr 1fr; grid-auto-rows: 23px; gap: 6px; padding: 5px 14px 0 11px; overflow: hidden; }
.btns button, .dact button { background: #e1e1e1; border: 1px solid #adadad; }
.wide { grid-column: span 2; }

.status { height: 21px; flex: none; background: #fafafa; display: flex; gap: 3px; padding: 1px 4px 1px 0; line-height: 17px; }
.status span { border: 1px solid #d0d0d0; padding-left: 1px; background: linear-gradient(#fff, #f2f2f2); white-space: nowrap; overflow: hidden; }
.s1 { flex: 363; } .s2 { flex: 224; } .s3 { flex: 172; } .s4 { flex: 228; }

/* taskbar */
.taskbar { height: 40px; flex: none; background: #020d11; display: flex; color: #fff; font-family: "Open Sans", "Noto Sans CJK SC", sans-serif; }
.start { width: 48px; background: #000; }
.search { width: 344px; background: #333; display: flex; align-items: center; gap: 5px; padding: 0 14px 0 9px; }
.search input { flex: 1; min-width: 0; background: none; border: 0; padding: 0; font: 14px/20px "Noto Sans CJK SC", sans-serif; color: #fff; }
.search input::placeholder { color: #999; opacity: 1; }
.apps { display: flex; padding-left: 2px; gap: 2px; }
.apps button { width: 48px; }
.apps .run { border-bottom: 2px solid #76b9ed; padding-top: 2px; }
.apps .cur { background: #343e42; }
.tray { margin-left: auto; display: flex; align-items: center; gap: 9px; padding-right: 16px; }
.two { text-align: center; line-height: 17px; }
.cpu { margin-right: 10px; }
.clock { width: 62px; margin: 0 8px; }
.ime { font-size: 14px; margin-right: 2px; }

/* query window */
.dialog { position: absolute; left: 402px; right: 111px; top: 151px; height: 512px; border: 1px solid #2f8fe8; background: #f0f0f0; box-shadow: 0 4px 16px #0006; display: flex; flex-direction: column; }
.dtitle { height: 29px; flex: none; background: #fff; display: flex; align-items: center; padding: 0 0 2px 8px; gap: 5px; }
.dtitle h2 { font: inherit; margin: 0; flex: 1; }
.dbar { height: 27px; flex: none; display: flex; }
.dbar > button { height: 21px; padding: 0 11px; border-right: 1px solid #a0a0a0; }
.dbar > button:first-child { padding-left: 7px; }
.dbar > .b2 { padding: 0 17px 0 11px; }
.dbar > .b3 { padding: 0 4px 0 5px; }
.dbar > .b5 { padding: 0 11px 0 9px; }
.dbar .press { padding: 0 10px 0 4px; height: 20px; line-height: 17px; }
.dact { margin-left: auto; display: flex; gap: 4px; padding-top: 3px; }
.dact button { width: 73px; height: 23px; }
.dact button:last-child { width: 70px; border-right: 0; }
.dbody { flex: 1; min-height: 0; display: flex; gap: 3px; }
.dleft { width: 216px; flex: none; display: flex; flex-direction: column; }
select { appearance: none; height: 20px; font: inherit; color: #000; border: 1px solid #adadad; border-radius: 0; padding: 0 20px 0 3px; margin: 0 1px 0 0; background: #e1e1e1 url("data:image/svg+xml,%3Csvg xmlns='http://www.w3.org/2000/svg' width='9' height='6'%3E%3Cpath d='M.5.5l4 4 4-4' fill='none' stroke='%23444'/%3E%3C/svg%3E") no-repeat right 5px center; }
.dtabs { display: flex; align-items: end; height: 22px; flex: none; }
.dtabs button { height: 19px; padding: 0 4px; border: 1px solid #d9d9d9; border-bottom: 0; }
.dtabs .cur { height: 21px; padding: 0 6px; background: #fff; }
.page { flex: 1; min-height: 0; background: #fff; border: 1px solid #dcdcdc; padding: 3px 2px 2px 3px; display: flex; flex-direction: column; }
.tree { flex: 1; min-height: 0; border: 1px solid #828790; padding: 1px; display: flex; flex-direction: column; }
.trow { flex: 1; min-height: 0; display: flex; }
.tree ul { flex: 1; min-width: 0; overflow: hidden; }
.tree li { height: 16px; white-space: nowrap; padding-left: 23px; --v: linear-gradient(#888 50%, transparent 50%); --h: repeating-linear-gradient(90deg, #888 0 1px, transparent 1px 2px); --p: linear-gradient(#888, #888); --x: url("data:image/svg+xml,%3Csvg xmlns='http://www.w3.org/2000/svg' width='7' height='10'%3E%3Cpath d='M1 1l4 4-4 4' fill='none' stroke='%23a6a6a6' stroke-width='2'/%3E%3C/svg%3E"); --o: url("data:image/svg+xml,%3Csvg xmlns='http://www.w3.org/2000/svg' width='10' height='7'%3E%3Cpath d='M1 1l4 4 4-4' fill='none' stroke='%23404040' stroke-width='2'/%3E%3C/svg%3E"); }
.tree .a.x { background: var(--x) 9px 3px no-repeat, var(--p) 20px 8px / 1px 1px no-repeat; }
.tree .a.o { background: var(--o) 7px 5px no-repeat, var(--p) 20px 8px / 1px 1px no-repeat; }
.tree .b { padding-left: 42px; background: var(--v) 12px 0 / 1px 2px repeat-y, var(--o) 26px 5px no-repeat, var(--p) 39px 8px / 1px 1px no-repeat; }
.tree .b.x { background: var(--v) 12px 0 / 1px 2px repeat-y, var(--x) 28px 3px no-repeat, var(--p) 39px 8px / 1px 1px no-repeat; }
.tree .d { padding-left: 61px; background: var(--v) 12px 0 / 1px 2px repeat-y, var(--v) 31px 0 / 1px 2px repeat-y, var(--v) 50px 0 / 1px 2px repeat-y, var(--h) 50px 8px / 9px 1px no-repeat; }
.tree .d.x { background: var(--v) 12px 0 / 1px 2px repeat-y, var(--v) 31px 0 / 1px 2px repeat-y, var(--x) 47px 3px no-repeat, var(--p) 58px 8px / 1px 1px no-repeat; }
mark { background: #d9d9d9; color: #000; display: inline-block; padding: 0 5px 0 4px; margin-left: -4px; }
.h { padding-right: 20px; }
.h i { width: 124px; }
.radios { height: 38px; flex: none; background: #f0f0f0; display: flex; align-items: center; gap: 16px; padding-left: 10px; }
.radios label { display: flex; align-items: center; gap: 8px; width: 48px; white-space: nowrap; }
input[type=radio] { appearance: none; flex: none; width: 12px; height: 12px; margin: 0; border: 1px solid #999; border-radius: 50%; background: #fff; }
input[type=radio]:checked { background: radial-gradient(#000 0 3px, #fff 4px); }
.dright { flex: 1; }
.q { width: 554px; }
.ring { position: absolute; left: 0; top: 0; pointer-events: none; }
```
